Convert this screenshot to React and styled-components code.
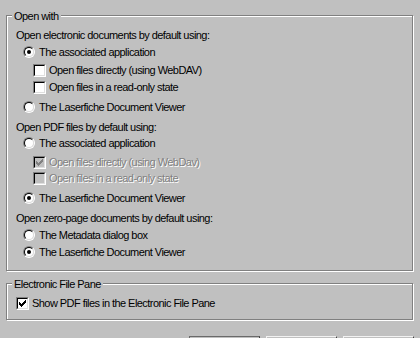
import React from "react";
import styled, { createGlobalStyle } from "styled-components";

const GlobalStyle = createGlobalStyle`
  html, body {
    margin: 0;
    padding: 0;
    background: #c0c0c0;
  }
  body {
    font-family: "Liberation Sans", Arial, sans-serif;
    font-size: 11px;
    letter-spacing: -0.55px;
    color: #000;
  }
`;

const Page = styled.div`
  box-sizing: border-box;
  width: 420px;
  height: 338px;
  overflow: hidden;
  padding: 15px 0 0 6px;
  background: #c0c0c0;
`;

const GroupBox = styled.div`
  position: relative;
  box-sizing: border-box;
  width: 407px;
  height: ${(p) => p.$height}px;
  margin-top: ${(p) => p.$mt || 0}px;
  border: 1px solid #808080;
  box-shadow: inset 1px 1px 0 #fff, 1px 1px 0 #fff;
  padding: 11px 0 0 9px;
`;

const Legend = styled.div`
  position: absolute;
  top: -6px;
  left: 5px;
  padding: 0 2px;
  height: 13px;
  line-height: 13px;
  background: #c0c0c0;
  white-space: nowrap;
`;

const Rows = styled.div`
  display: flex;
  flex-direction: column;
`;

const Row = styled.div`
  display: flex;
  align-items: center;
  height: 16px;
  margin-top: ${(p) => p.$mt || 0}px;
  margin-left: ${(p) => p.$indent || 0}px;
  gap: ${(p) => p.$gap || 0}px;
  white-space: nowrap;
`;

const Label = styled.span`
  line-height: 13px;
  color: ${(p) => (p.$disabled ? "#808080" : "#000")};
  text-shadow: ${(p) => (p.$disabled ? "1px 1px 0 #fff" : "none")};
`;

const RadioOuter = styled.span`
  box-sizing: border-box;
  width: 12px;
  height: 12px;
  flex: none;
  border-radius: 50%;
  border: 1px solid;
  border-color: #808080 #fff #fff #808080;
  display: flex;
`;

const RadioInner = styled.span`
  box-sizing: border-box;
  width: 10px;
  height: 10px;
  border-radius: 50%;
  border: 1px solid;
  border-color: #000 #dfdfdf #dfdfdf #000;
  background: #fff;
  display: flex;
  align-items: center;
  justify-content: center;
`;

const Dot = styled.span`
  width: 4px;
  height: 4px;
  border-radius: 50%;
  background: #000;
`;

const CheckOuter = styled.span`
  box-sizing: border-box;
  width: 13px;
  height: 13px;
  flex: none;
  border: 1px solid;
  border-color: #808080 #fff #fff #808080;
  display: flex;
`;

const CheckInner = styled.span`
  box-sizing: border-box;
  width: 11px;
  height: 11px;
  border: 1px solid;
  border-color: #000 #dfdfdf #dfdfdf #000;
  background: ${(p) => (p.$disabled ? "#c0c0c0" : "#fff")};
  display: flex;
  padding: 1px;
`;

const ButtonRow = styled.div`
  display: flex;
  gap: 6px;
  margin-top: 16px;
  padding-left: 183px;
`;

const Button = styled.button`
  box-sizing: border-box;
  width: 71px;
  height: 23px;
  flex: none;
  background: #c0c0c0;
  border: 1px solid;
  border-color: ${(p) => (p.$default ? "#6a6a6a" : "#f2f2f2")} #404040 #404040
    ${(p) => (p.$default ? "#6a6a6a" : "#f2f2f2")};
  padding: 0;
`;

const checkCols = [2, 3, 4, 3, 2, 1, 0];

function CheckMark({ color }) {
  return (
    <svg width="7" height="7" viewBox="0 0 7 7" shapeRendering="crispEdges">
      {checkCols.map((y, x) => (
        <rect key={x} x={x} y={y} width="1" height="3" fill={color} />
      ))}
    </svg>
  );
}

function Radio({ checked }) {
  return (
    <RadioOuter>
      <RadioInner>{checked && <Dot />}</RadioInner>
    </RadioOuter>
  );
}

function Checkbox({ checked, disabled }) {
  return (
    <CheckOuter>
      <CheckInner $disabled={disabled}>
        {checked && <CheckMark color={disabled ? "#808080" : "#000"} />}
      </CheckInner>
    </CheckOuter>
  );
}

const openWith = [
  { kind: "heading", label: "Open electronic documents by default using:", mt: 0 },
  { kind: "radio", label: "The associated application", checked: true, mt: 1 },
  { kind: "check", label: "Open files directly (using WebDAV)", mt: 2 },
  { kind: "check", label: "Open files in a read-only state", mt: 1 },
  { kind: "radio", label: "The Laserfiche Document Viewer", mt: 4 },
  { kind: "heading", label: "Open PDF files by default using:", mt: 4 },
  { kind: "radio", label: "The associated application", mt: 0 },
  { kind: "check", label: "Open files directly (using WebDav)", checked: true, disabled: true, mt: 3 },
  { kind: "check", label: "Open files in a read-only state", disabled: true, mt: 0 },
  { kind: "radio", label: "The Laserfiche Document Viewer", checked: true, mt: 4 },
  { kind: "heading", label: "Open zero-page documents by default using:", mt: 4 },
  { kind: "radio", label: "The Metadata dialog box", mt: 1 },
  { kind: "radio", label: "The Laserfiche Document Viewer", checked: true, mt: 1 },
];

function OptionRow({ item, checkIndent = 17 }) {
  if (item.kind === "heading") {
    return (
      <Row $mt={item.mt}>
        <Label>{item.label}</Label>
      </Row>
    );
  }
  if (item.kind === "radio") {
    return (
      <Row $mt={item.mt} $indent={7} $gap={4}>
        <Radio checked={item.checked} />
        <Label>{item.label}</Label>
      </Row>
    );
  }
  return (
    <Row $mt={item.mt} $indent={checkIndent} $gap={3}>
      <Checkbox checked={item.checked} disabled={item.disabled} />
      <Label $disabled={item.disabled}>{item.label}</Label>
    </Row>
  );
}

export default function App() {
  return (
    <>
      <GlobalStyle />
      <Page>
        <GroupBox $height={256}>
          <Legend>Open with</Legend>
          <Rows>
            {openWith.map((item, i) => (
              <OptionRow key={i} item={item} />
            ))}
          </Rows>
        </GroupBox>
        <GroupBox $height={37} $mt={12}>
          <Legend>Electronic File Pane</Legend>
          <Rows>
            <OptionRow
              item={{ kind: "check", label: "Show PDF files in the Electronic File Pane", checked: true, mt: 0 }}
              checkIndent={0}
            />
          </Rows>
        </GroupBox>
        <ButtonRow>
          <Button $default aria-label="OK" />
          <Button aria-label="Cancel" />
          <Button aria-label="Apply" />
        </ButtonRow>
      </Page>
    </>
  );
}
